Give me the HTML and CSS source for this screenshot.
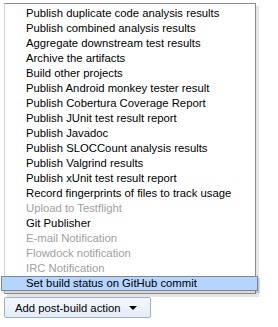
FILE: index.html
```html
<!DOCTYPE html>
<html>
<head>
	<title>post-build actions</title>
	<meta http-equiv="content-type" content="text/html;charset=utf-8" />
	<link rel="stylesheet" href="styles.css">
</head>
<body>
	<div class="menu">
		<ul class="items">
			<li>Publish duplicate code analysis results</li>
			<li>Publish combined analysis results</li>
			<li>Aggregate downstream test results</li>
			<li>Archive the artifacts</li>
			<li>Build other projects</li>
			<li>Publish Android monkey tester result</li>
			<li>Publish Cobertura Coverage Report</li>
			<li>Publish JUnit test result report</li>
			<li>Publish Javadoc</li>
			<li>Publish SLOCCount analysis results</li>
			<li>Publish Valgrind results</li>
			<li>Publish xUnit test result report</li>
			<li>Record fingerprints of files to track usage</li>
			<li class="off">Upload to Testflight</li>
			<li>Git Publisher</li>
			<li class="off">E-mail Notification</li>
			<li class="off">Flowdock notification</li>
			<li class="off">IRC Notification</li>
			<li class="sel">Set build status on GitHub commit</li>
		</ul>
	</div>
	<button class="add">Add post-build action <span class="arrow"></span></button>
</body>
</html>
```

FILE: styles.css
```css
*{padding:0;margin:0;}
body{background:#fff;font-family:"Liberation Sans", Arial, sans-serif;font-size:11.3px;color:#000;}

.menu{margin:3px 0 0 4px;width:252px;box-sizing:border-box;border:1px solid #8c8c8c;border-left-color:#d4d4d4;box-shadow:3px 3px 0 rgba(0,0,0,0.1);padding:2px 0 2px 0;}
.items{list-style:none;}
.items li{height:15px;line-height:15px;padding-left:21px;white-space:nowrap;}
.items li.off{color:#a0a0a0;}
.items li.sel{margin:0 -3px 0 -4px;padding-left:24px;height:13px;line-height:13px;background:#b5d5ff;border:1px solid #80868f;box-shadow:2px 2px 1px rgba(0,0,0,0.15);}

.add{margin:3px 0 0 4px;height:21px;padding:0 13px 0 10px;font-family:"Liberation Sans", Arial, sans-serif;font-size:11.3px;color:#000;border:1px solid #9cb0c8;border-radius:2px;background:linear-gradient(#f4f8fd, #e3ecf7);display:flex;align-items:center;gap:8px;}
.arrow{width:0;height:0;border-left:4px solid transparent;border-right:4px solid transparent;border-top:4px solid #000;}
```
